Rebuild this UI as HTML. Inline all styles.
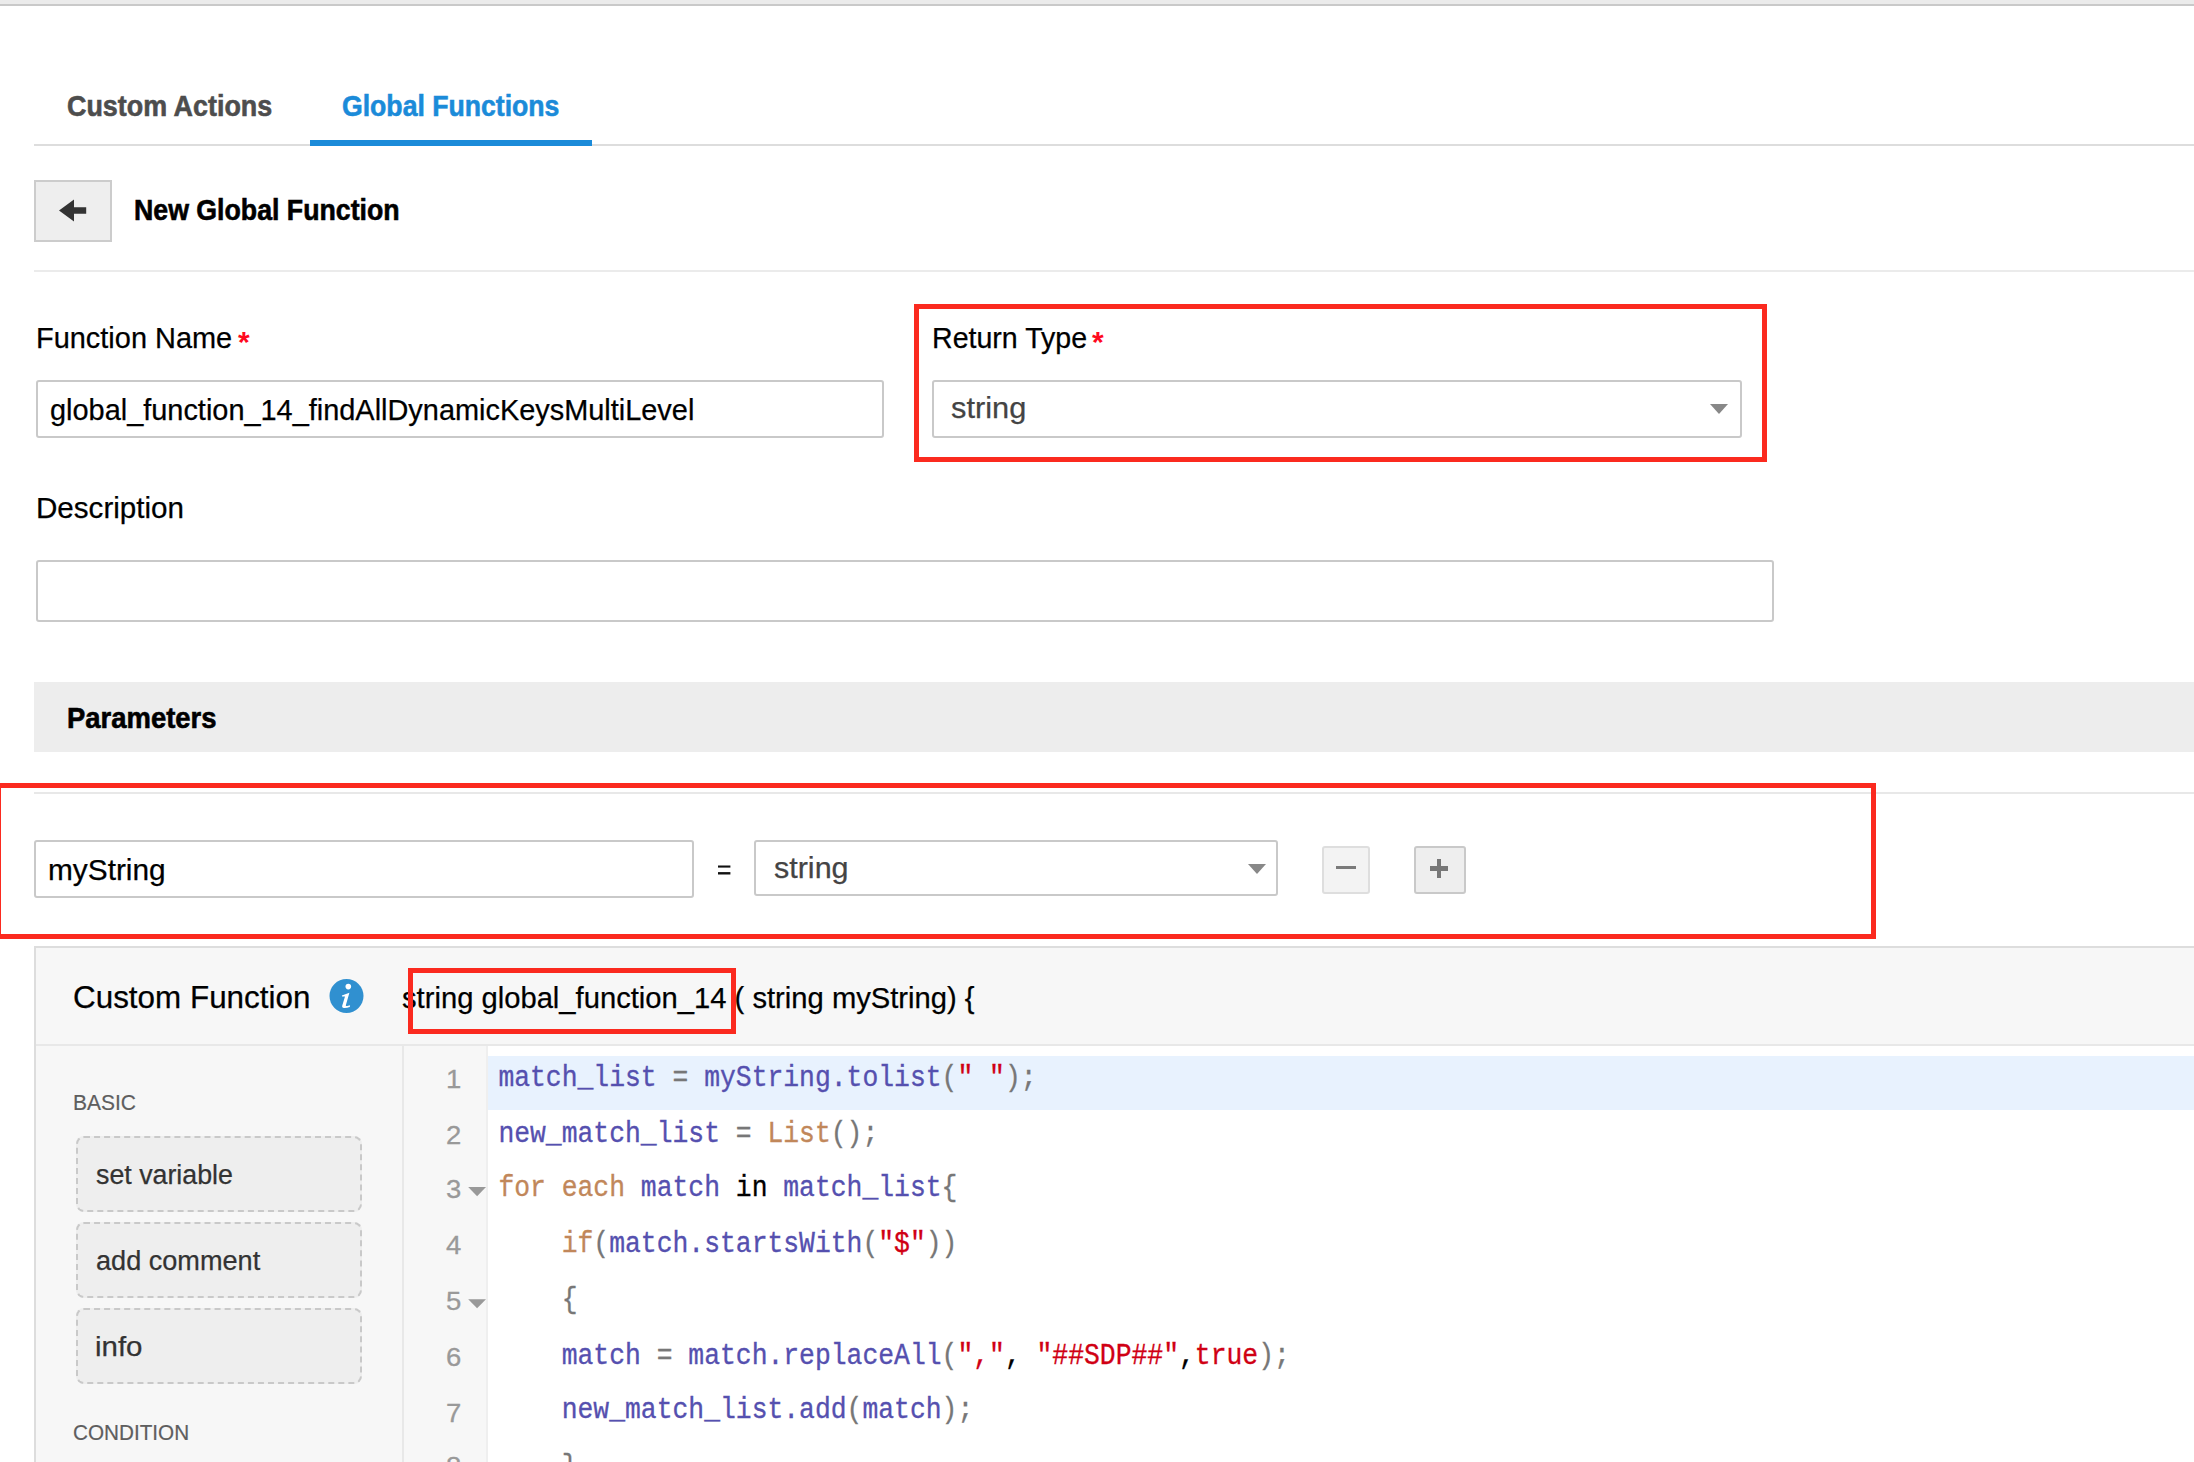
<!DOCTYPE html>
<html><head><meta charset="utf-8"><style>
html,body{margin:0;padding:0;background:#fff;width:2194px;height:1462px;overflow:hidden;position:relative}
.b{position:absolute}
.t{position:absolute;white-space:pre;line-height:1;font-family:"Liberation Sans", sans-serif;transform-origin:0 0}
.code{font-family:"Liberation Mono", monospace;transform:scaleY(1.15);transform-origin:0 76%;-webkit-text-stroke:0.3px currentColor}
.code span{-webkit-text-stroke:0.3px currentColor}
</style></head><body>
<div class="b" style="left:0px;top:0px;width:2194px;height:4px;background:#ebebeb"></div>
<div class="b" style="left:0px;top:4px;width:2194px;height:2px;background:#c9c9c9"></div>
<div class="b" style="left:34px;top:144px;width:2160px;height:2px;background:#dddddd"></div>
<div class="b" style="left:310px;top:140px;width:282px;height:6px;background:#1b8bd9"></div>
<div class="t" style="left:66.82px;top:91.20px;font-size:30.01px;font-weight:bold;color:#4d4d4d;transform:scaleX(0.8967);-webkit-text-stroke:0.6px #4d4d4d;">Custom Actions</div>
<div class="t" style="left:341.83px;top:90.60px;font-size:30.01px;font-weight:bold;color:#1b8bd9;transform:scaleX(0.8874);-webkit-text-stroke:0.6px #1b8bd9;">Global Functions</div>
<div class="b" style="left:34px;top:180px;width:78px;height:62px;background:#eeeeee;border:2px solid #cccccc;box-sizing:border-box"></div>
<svg class="b" style="left:0;top:0" width="200" height="260"><polygon points="59,210.5 74,199.5 74,207.2 86.2,207.2 86.2,213.8 74,213.8 74,221.5" fill="#333"/></svg>
<div class="t" style="left:133.73px;top:195.01px;font-size:29.52px;font-weight:bold;color:#000;transform:scaleX(0.9050);-webkit-text-stroke:0.6px #000;">New Global Function</div>
<div class="b" style="left:34px;top:270px;width:2160px;height:2px;background:#ebebeb"></div>
<div class="t" style="left:35.68px;top:322.86px;font-size:29.81px;font-weight:normal;color:#000;transform:scaleX(0.9711);-webkit-text-stroke:0.25px #000;">Function Name</div>
<div class="t" style="left:238.10px;top:326.61px;font-size:30.00px;font-weight:bold;color:#ff0a1e;">*</div>
<div class="b" style="left:36px;top:380px;width:848px;height:58px;border:2px solid #c9c9c9;border-radius:3px;box-sizing:border-box;background:#fff"></div>
<div class="t" style="left:49.84px;top:395.13px;font-size:29.62px;font-weight:normal;color:#000;transform:scaleX(0.9762);-webkit-text-stroke:0.25px #000;">global_function_14_findAllDynamicKeysMultiLevel</div>
<div class="t" style="left:931.71px;top:322.71px;font-size:29.52px;font-weight:normal;color:#000;transform:scaleX(0.9680);-webkit-text-stroke:0.25px #000;">Return Type</div>
<div class="t" style="left:1092.10px;top:326.61px;font-size:30.00px;font-weight:bold;color:#ff0a1e;">*</div>
<div class="b" style="left:932px;top:380px;width:810px;height:58px;border:2px solid #c9c9c9;border-radius:3px;box-sizing:border-box;background:#fff"></div>
<div class="t" style="left:951.08px;top:392.71px;font-size:29.52px;font-weight:normal;color:#444;transform:scaleX(1.0434);-webkit-text-stroke:0.25px #444;">string</div>
<svg class="b" style="left:1700px;top:395px" width="40" height="30"><polygon points="10,9 28,9 19,19" fill="#888"/></svg>
<div class="b" style="left:914px;top:304px;width:853px;height:158px;border:5px solid #fb2a1f;box-sizing:border-box"></div>
<div class="t" style="left:35.63px;top:493.06px;font-size:29.81px;font-weight:normal;color:#000;transform:scaleX(0.9928);-webkit-text-stroke:0.25px #000;">Description</div>
<div class="b" style="left:36px;top:560px;width:1738px;height:62px;border:2px solid #c9c9c9;border-radius:3px;box-sizing:border-box;background:#fff"></div>
<div class="b" style="left:34px;top:682px;width:2160px;height:70px;background:#ededed"></div>
<div class="t" style="left:67.08px;top:703.01px;font-size:29.52px;font-weight:bold;color:#000;transform:scaleX(0.9298);-webkit-text-stroke:0.6px #000;">Parameters</div>
<div class="b" style="left:34px;top:792px;width:2160px;height:2px;background:#e8e8e8"></div>
<div class="b" style="left:34px;top:840px;width:660px;height:58px;border:2px solid #c9c9c9;border-radius:3px;box-sizing:border-box;background:#fff"></div>
<div class="t" style="left:47.91px;top:855.01px;font-size:29.52px;font-weight:normal;color:#000;transform:scaleX(1.0103);-webkit-text-stroke:0.25px #000;">myString</div>
<svg class="b" style="left:700px;top:850px" width="40" height="40"><rect x="18" y="15.5" width="12.4" height="2.1" fill="#111"/><rect x="18" y="22.1" width="12.4" height="2.4" fill="#111"/></svg>
<div class="b" style="left:754px;top:840px;width:524px;height:56px;border:2px solid #c9c9c9;border-radius:3px;box-sizing:border-box;background:#fff"></div>
<div class="t" style="left:774.09px;top:853.01px;font-size:29.52px;font-weight:normal;color:#444;transform:scaleX(1.0331);-webkit-text-stroke:0.25px #444;">string</div>
<svg class="b" style="left:1238px;top:855px" width="40" height="30"><polygon points="10,9 28,9 19,19" fill="#888"/></svg>
<div class="b" style="left:1322px;top:846px;width:48px;height:48px;background:#f3f3f3;border:2px solid #dedede;border-radius:3px;box-sizing:border-box"></div>
<div class="b" style="left:1336px;top:865.8px;width:19.59999999999991px;height:3.400000000000091px;background:#7a7a7a"></div>
<div class="b" style="left:1414px;top:846px;width:52px;height:48px;background:#eeeeee;border:2px solid #c9c9c9;border-radius:3px;box-sizing:border-box"></div>
<div class="b" style="left:1430px;top:866px;width:18px;height:4.5px;background:#777"></div>
<div class="b" style="left:1436.8px;top:859px;width:4.7000000000000455px;height:18.5px;background:#777"></div>
<div class="b" style="left:-4px;top:783px;width:1880px;height:156px;border:5px solid #fb2a1f;box-sizing:border-box"></div>
<div class="b" style="left:34px;top:946px;width:2166px;height:524px;border:2px solid #dddddd;box-sizing:border-box;background:#f7f7f7"></div>
<div class="b" style="left:36px;top:1044px;width:2158px;height:2px;background:#e8e8e8"></div>
<div class="b" style="left:402px;top:1046px;width:2px;height:416px;background:#e8e8e8"></div>
<div class="b" style="left:486px;top:1046px;width:2px;height:416px;background:#efefef"></div>
<div class="b" style="left:488px;top:1046px;width:1706px;height:416px;background:#ffffff"></div>
<div class="b" style="left:488px;top:1056px;width:1706px;height:54px;background:#e8f2fe"></div>
<div class="t" style="left:73.43px;top:981.76px;font-size:31.94px;font-weight:normal;color:#000;transform:scaleX(0.9835);-webkit-text-stroke:0.25px #000;">Custom Function</div>
<svg class="b" style="left:329px;top:979px" width="35" height="35" viewBox="0 0 35 35"><circle cx="17.5" cy="17" r="17" fill="#3090d0"/><circle cx="19.3" cy="7.6" r="2.8" fill="#fff"/><path d="M12.9,16.6 L20.4,13.8 L16.9,26.0 C16.6,27.0 17.2,27.2 18.2,26.9 L21.1,26.3 L20.8,28.0 C18.8,28.7 16.6,29.0 15.0,28.9 C13.4,28.8 12.9,28.0 13.2,26.8 L16.0,17.4 L13.1,17.6 Z" fill="#fff"/></svg>
<div class="t" style="left:401.62px;top:984.22px;font-size:29.04px;font-weight:normal;color:#000;transform:scaleX(1.0052);-webkit-text-stroke:0.25px #000;">string global_function_14 ( string myString) {</div>
<div class="b" style="left:408px;top:968px;width:327.5px;height:65.5px;border:5px solid #fb2a1f;box-sizing:border-box"></div>
<div class="t" style="left:72.72px;top:1092.39px;font-size:22.46px;font-weight:normal;color:#5e5e5e;transform:scaleX(0.9349);-webkit-text-stroke:0.2px #5e5e5e;">BASIC</div>
<div class="b" style="left:76px;top:1136px;width:286px;height:76px;background:#eeeeee;border:2px dashed #c9c9c9;border-radius:8px;box-sizing:border-box"></div>
<div class="t" style="left:96.20px;top:1161.70px;font-size:26.81px;font-weight:normal;color:#333;transform:scaleX(0.9990);-webkit-text-stroke:0.25px #333;">set variable</div>
<div class="b" style="left:76px;top:1222px;width:286px;height:76px;background:#eeeeee;border:2px dashed #c9c9c9;border-radius:8px;box-sizing:border-box"></div>
<div class="t" style="left:95.92px;top:1247.70px;font-size:26.81px;font-weight:normal;color:#333;transform:scaleX(1.0114);-webkit-text-stroke:0.25px #333;">add comment</div>
<div class="b" style="left:76px;top:1308px;width:286px;height:76px;background:#eeeeee;border:2px dashed #c9c9c9;border-radius:8px;box-sizing:border-box"></div>
<div class="t" style="left:94.94px;top:1333.70px;font-size:26.81px;font-weight:normal;color:#333;transform:scaleX(1.0992);-webkit-text-stroke:0.25px #333;">info</div>
<div class="t" style="left:73.37px;top:1422.39px;font-size:22.46px;font-weight:normal;color:#5e5e5e;transform:scaleX(0.9215);-webkit-text-stroke:0.2px #5e5e5e;">CONDITION</div>
<div class="t" style="left:445.88px;top:1066.07px;font-size:26.62px;font-weight:normal;color:#999;transform:scaleX(1.0331);-webkit-text-stroke:0.3px #999;">1</div>
<div class="t" style="left:445.88px;top:1121.87px;font-size:26.62px;font-weight:normal;color:#999;transform:scaleX(1.0331);-webkit-text-stroke:0.3px #999;">2</div>
<div class="t" style="left:445.88px;top:1176.07px;font-size:26.62px;font-weight:normal;color:#999;transform:scaleX(1.0331);-webkit-text-stroke:0.3px #999;">3</div>
<div class="t" style="left:445.88px;top:1232.07px;font-size:26.62px;font-weight:normal;color:#999;transform:scaleX(1.0331);-webkit-text-stroke:0.3px #999;">4</div>
<div class="t" style="left:445.88px;top:1288.27px;font-size:26.62px;font-weight:normal;color:#999;transform:scaleX(1.0331);-webkit-text-stroke:0.3px #999;">5</div>
<div class="t" style="left:445.88px;top:1344.07px;font-size:26.62px;font-weight:normal;color:#999;transform:scaleX(1.0331);-webkit-text-stroke:0.3px #999;">6</div>
<div class="t" style="left:445.88px;top:1399.67px;font-size:26.62px;font-weight:normal;color:#999;transform:scaleX(1.0331);-webkit-text-stroke:0.3px #999;">7</div>
<div class="t" style="left:445.88px;top:1453.07px;font-size:26.62px;font-weight:normal;color:#999;transform:scaleX(1.0331);-webkit-text-stroke:0.3px #999;">8</div>
<svg class="b" style="left:460px;top:1180px" width="30" height="130"><polygon points="8.2,7 26,7 17.1,16.3" fill="#999"/><polygon points="8.2,119.2 26,119.2 17.1,128.3" fill="#999"/></svg>
<div class="t code" style="left:498.4px;top:1065.95px;font-size:26.38px"><span style="color:#5550af">match_list</span> <span style="color:#777">=</span> <span style="color:#5550af">myString.tolist</span><span style="color:#777">(</span><span style="color:#d00014">"</span> <span style="color:#d00014">"</span><span style="color:#777">);</span></div>
<div class="t code" style="left:498.4px;top:1121.75px;font-size:26.38px"><span style="color:#5550af">new_match_list</span> <span style="color:#777">=</span> <span style="color:#c1875a">List</span><span style="color:#777">();</span></div>
<div class="t code" style="left:498.4px;top:1175.75px;font-size:26.38px"><span style="color:#c1875a">for</span> <span style="color:#c1875a">each</span> <span style="color:#5550af">match</span> <span style="color:#000">in</span> <span style="color:#5550af">match_list</span><span style="color:#777">{</span></div>
<div class="t code" style="left:498.4px;top:1231.75px;font-size:26.38px">    <span style="color:#c1875a">if</span><span style="color:#777">(</span><span style="color:#5550af">match.startsWith</span><span style="color:#777">(</span><span style="color:#d00014">"$"</span><span style="color:#777">))</span></div>
<div class="t code" style="left:498.4px;top:1287.65px;font-size:26.38px">    <span style="color:#777">{</span></div>
<div class="t code" style="left:498.4px;top:1343.75px;font-size:26.38px">    <span style="color:#5550af">match</span> <span style="color:#777">=</span> <span style="color:#5550af">match.replaceAll</span><span style="color:#777">(</span><span style="color:#d00014">","</span><span style="color:#000">,</span> <span style="color:#d00014">"##SDP##"</span><span style="color:#000">,</span><span style="color:#d00014">true</span><span style="color:#777">);</span></div>
<div class="t code" style="left:498.4px;top:1397.85px;font-size:26.38px">    <span style="color:#5550af">new_match_list.add</span><span style="color:#777">(</span><span style="color:#5550af">match</span><span style="color:#777">);</span></div>
<div class="t code" style="left:498.4px;top:1454.55px;font-size:26.38px">    <span style="color:#777">}</span></div>
</body></html>
